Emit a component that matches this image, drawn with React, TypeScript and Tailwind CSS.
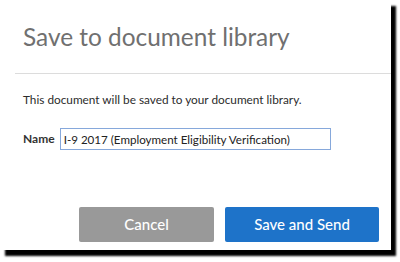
import React from "react";

export default function App() {
  return (
    <main className="w-[400px] h-[262px] bg-white overflow-hidden" style={{ fontFamily: "Lato, 'Open Sans', sans-serif" }}>
      <div className="w-[391px] h-[250px] bg-white flex flex-col shadow-[5px_6px_2px_rgba(0,0,0,1)]">
        <header className="h-[74px] ml-[15px] border-b border-[#dcdcdc] flex items-center pl-[8px] pt-[2px]">
          <h1 className="text-[24.4px] text-[#707070] leading-none">Save to document library</h1>
        </header>
        <p className="mt-[19px] ml-[23px] text-[11.8px] text-[#2c2c2c] leading-[14px]">
          This document will be saved to your document library.
        </p>
        <div className="flex items-center mt-[21px] ml-[23px] gap-[5px]">
          <label htmlFor="docName" className="text-[12px] font-bold text-[#333]">
            Name
          </label>
          <input
            id="docName"
            type="text"
            defaultValue="I-9 2017 (Employment Eligibility Verification)"
            className="w-[271px] h-[22px] border border-[#86a8db] px-[3px] text-[11.6px] text-[#222] outline-none"
          />
        </div>
        <div className="flex justify-end gap-[11px] mt-auto mb-[8px] mr-[12px]">
          <button type="button" className="w-[135px] h-[35px] rounded-[2px] bg-[#999999] text-white text-[15px] font-medium">
            Cancel
          </button>
          <button type="button" className="w-[154px] h-[35px] rounded-[2px] bg-[#1e73c9] text-white text-[15px] font-medium">
            Save and Send
          </button>
        </div>
      </div>
    </main>
  );
}
